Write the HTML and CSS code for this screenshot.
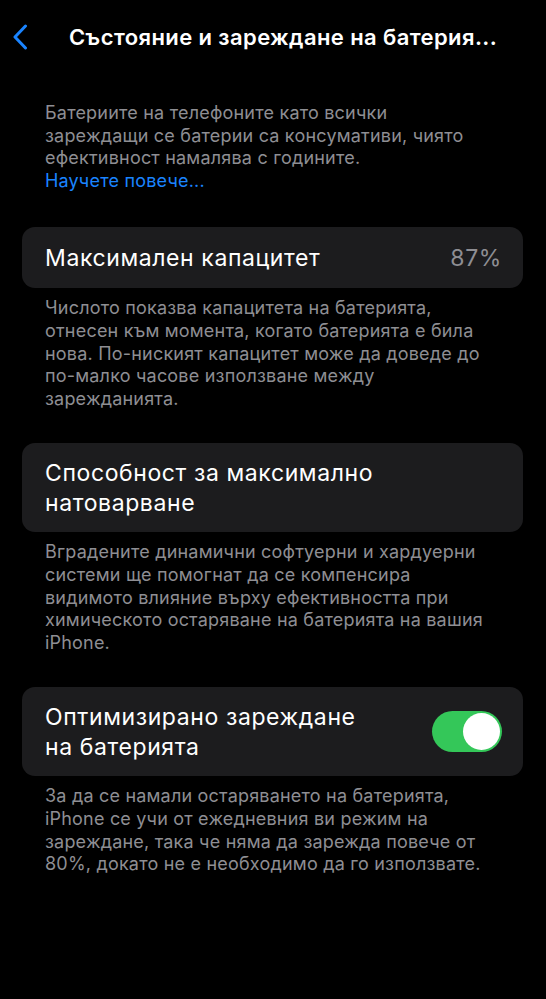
FILE: index.html
```html
<!DOCTYPE html>
<html lang="bg">
<head>
<meta charset="utf-8">
<link rel="stylesheet" href="styles.css">
</head>
<body>
<div class="screen">
  <header class="nav">
    <svg class="back" width="16" height="26" viewBox="0 0 16 26"><path d="M13.5 2 L3 13 L13.5 24" fill="none" stroke="#1a84ff" stroke-width="3" stroke-linecap="round" stroke-linejoin="round"/></svg>
    <h1 class="title">Състояние и зареждане на батерия...</h1>
  </header>

  <p class="note intro">Батериите на телефоните като всички<br>зареждащи се батерии са консумативи, чиято<br>ефективност намалява с годините.<br><span class="link">Научете повече...</span></p>

  <div class="card one">
    <span class="label">Максимален капацитет</span>
    <span class="value">87%</span>
  </div>
  <p class="note">Числото показва капацитета на батерията,<br>отнесен към момента, когато батерията е била<br>нова. По-ниският капацитет може да доведе до<br>по-малко часове използване между<br>зарежданията.</p>

  <div class="card two">
    <span class="label">Способност за максимално<br>натоварване</span>
  </div>
  <p class="note">Вградените динамични софтуерни и хардуерни<br>системи ще помогнат да се компенсира<br>видимото влияние върху ефективността при<br>химическото остаряване на батерията на вашия<br>iPhone.</p>

  <div class="card two">
    <span class="label">Оптимизирано зареждане<br>на батерията</span>
    <span class="toggle"><span class="knob"></span></span>
  </div>
  <p class="note">За да се намали остаряването на батерията,<br>iPhone се учи от ежедневния ви режим на<br>зареждане, така че няма да зарежда повече от<br>80%, докато не е необходимо да го използвате.</p>
</div>
</body>
</html>
```
FILE: styles.css
```css
* { box-sizing: border-box; }
html, body { margin: 0; padding: 0; background: #000; }
body { font-family: Inter, "Noto Sans", "DejaVu Sans", sans-serif; color: #fff; }
.screen { width: 546px; height: 999px; background: #000; overflow: hidden; }
.nav { display: flex; align-items: center; height: 74px; padding-left: 12px; }
.back { margin-right: 41px; }
.title { margin: 0; font-size: 22px; font-weight: 600; letter-spacing: 0.4px; white-space: nowrap; }
.note { margin: 0; padding: 0 0 0 45px; font-size: 18px; line-height: 22.6px; letter-spacing: 0.2px; color: #8e8e93; white-space: nowrap; }
.intro { margin-top: 28px; margin-bottom: 35px; }
.link { color: #1a84ff; }
.card { margin: 0 23px 9px 22px; background: #1c1c1e; border-radius: 13px; display: flex; align-items: center; justify-content: space-between; padding: 0 21px 0 23px; font-size: 23px; letter-spacing: 0.6px; }
.card.one { height: 61px; }
.card.two { height: 89px; line-height: 30px; }
.card + .note { margin-bottom: 33px; }
.value { color: #8e8e93; }
.toggle { width: 70px; height: 41px; border-radius: 21px; background: #34c759; position: relative; flex: none; }
.knob { position: absolute; right: 2px; top: 2px; width: 37px; height: 37px; border-radius: 50%; background: #fff; }
```
